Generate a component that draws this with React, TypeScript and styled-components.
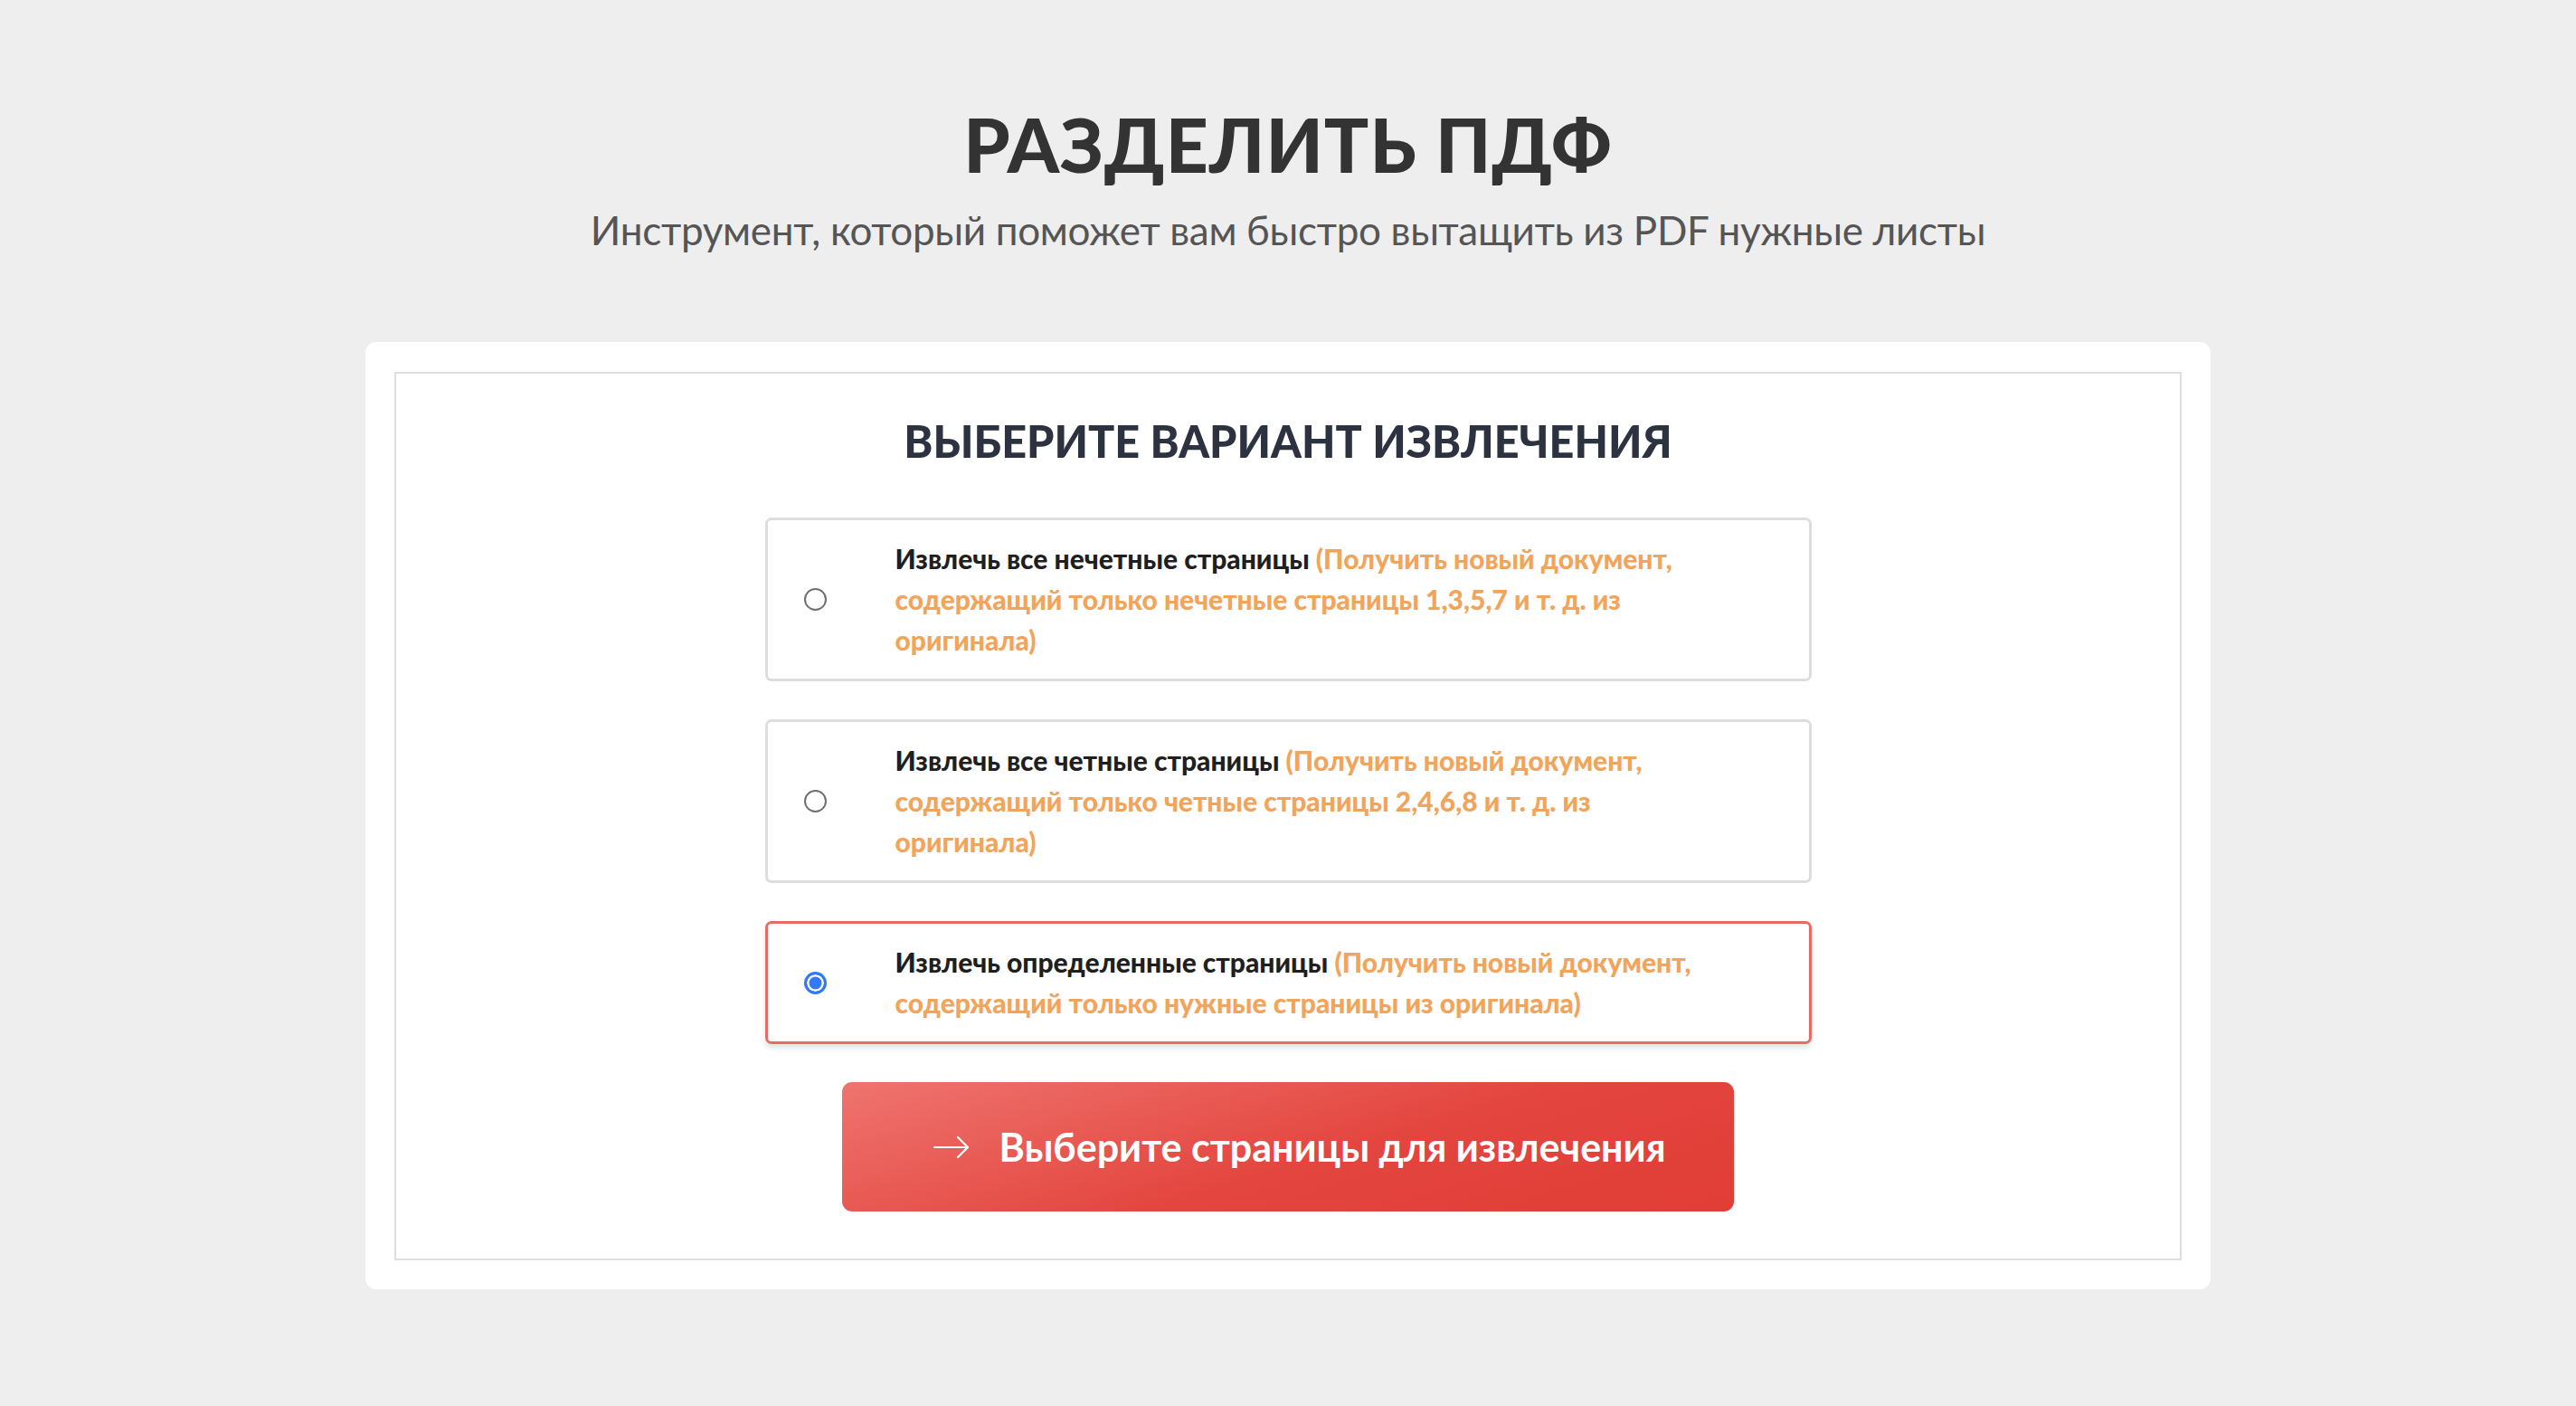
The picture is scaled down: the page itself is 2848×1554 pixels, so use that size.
import * as React from "react";
import styled, { createGlobalStyle } from "styled-components";

const GlobalStyle = createGlobalStyle`
  * { box-sizing: border-box; }
  body {
    margin: 0;
    background: #eeeeee;
    font-family: Lato, "Noto Sans", "DejaVu Sans", sans-serif;
  }
`;

const Page = styled.main`
  display: flex;
  flex-direction: column;
  align-items: center;
  padding: 110px 0 100px;
`;

const Title = styled.h1`
  margin: 0;
  font-size: 82px;
  line-height: 1.2;
  font-weight: 900;
  color: #333333;
  letter-spacing: 1px;
`;

const Subtitle = styled.p`
  margin: 20px 0 0;
  font-size: 44px;
  line-height: 1.2;
  font-weight: 400;
  color: #555555;
  letter-spacing: -0.3px;
`;

const Card = styled.section`
  margin-top: 97px;
  width: 2040px;
  background: #ffffff;
  border-radius: 12px;
  padding: 33px 32px 32px;
`;

const Frame = styled.div`
  border: 2px solid #dedede;
  display: flex;
  flex-direction: column;
  align-items: center;
  padding: 45px 0 52px;
`;

const Heading = styled.h2`
  margin: 0 0 56px;
  font-size: 48.5px;
  line-height: 1.2;
  font-weight: 900;
  color: #2c3240;
`;

const Options = styled.div`
  display: flex;
  flex-direction: column;
  gap: 42px;
  width: 1157px;
`;

const Option = styled.label<{ $active?: boolean }>`
  display: flex;
  align-items: center;
  gap: 76px;
  padding: 20px 40px;
  border: 3px solid ${(p) => (p.$active ? "#ea6b66" : "#dddddd")};
  border-radius: 7px;
  box-shadow: ${(p) => (p.$active ? "0 4px 6px rgba(0,0,0,0.12)" : "none")};
  cursor: pointer;
`;

const Radio = styled.input`
  appearance: none;
  flex: none;
  width: 25px;
  height: 25px;
  margin: 0;
  border-radius: 50%;
  border: 2px solid #6f6f6f;
  background: #ffffff;
  cursor: pointer;

  &:checked {
    border: 3px solid #3478f6;
    background: #3478f6;
    box-shadow: inset 0 0 0 2.5px #ffffff;
  }
`;

const OptionText = styled.span`
  font-size: 30px;
  line-height: 45px;
  font-weight: 900;
  color: #1f1f1f;
  white-space: nowrap;
`;

const Note = styled.span`
  color: #f2a45b;
`;

const Button = styled.button`
  margin-top: 42px;
  width: 986px;
  height: 143px;
  border: none;
  border-radius: 11px;
  background: linear-gradient(163deg, #ef746f 0%, #e3463f 55%, #e03d36 100%);
  color: #ffffff;
  display: flex;
  align-items: center;
  justify-content: center;
  gap: 32px;
  padding-left: 30px;
  font-family: inherit;
  font-size: 43px;
  font-weight: 700;
  cursor: pointer;
`;

const Arrow = () => (
  <svg width="42" height="28" viewBox="0 0 42 28" fill="none" stroke="#fff" strokeWidth="2.2" strokeLinecap="round" strokeLinejoin="round">
    <path d="M2 14h37" />
    <path d="M28 3l11 11-11 11" />
  </svg>
);

const options = [
  {
    main: "Извлечь все нечетные страницы",
    lines: ["(Получить новый документ,", "содержащий только нечетные страницы 1,3,5,7 и т. д. из", "оригинала)"],
  },
  {
    main: "Извлечь все четные страницы",
    lines: ["(Получить новый документ,", "содержащий только четные страницы 2,4,6,8 и т. д. из", "оригинала)"],
  },
  {
    main: "Извлечь определенные страницы",
    lines: ["(Получить новый документ,", "содержащий только нужные страницы из оригинала)"],
  },
];

export default function App() {
  const [selected, setSelected] = React.useState(2);

  return (
    <>
      <GlobalStyle />
      <Page>
        <Title>РАЗДЕЛИТЬ ПДФ</Title>
        <Subtitle>Инструмент, который поможет вам быстро вытащить из PDF нужные листы</Subtitle>
        <Card>
          <Frame>
            <Heading>ВЫБЕРИТЕ ВАРИАНТ ИЗВЛЕЧЕНИЯ</Heading>
            <Options>
              {options.map((o, i) => (
                <Option key={i} $active={selected === i}>
                  <Radio
                    type="radio"
                    name="mode"
                    checked={selected === i}
                    onChange={() => setSelected(i)}
                  />
                  <OptionText>
                    {o.main} <Note>{o.lines[0]}</Note>
                    {o.lines.slice(1).map((l, j) => (
                      <React.Fragment key={j}>
                        <br />
                        <Note>{l}</Note>
                      </React.Fragment>
                    ))}
                  </OptionText>
                </Option>
              ))}
            </Options>
            <Button>
              <Arrow />
              Выберите страницы для извлечения
            </Button>
          </Frame>
        </Card>
      </Page>
    </>
  );
}
